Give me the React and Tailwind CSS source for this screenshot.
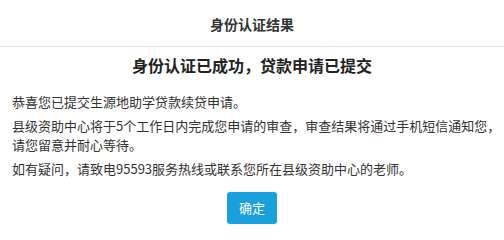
import React from 'react';

const PARAGRAPHS = [
  ['恭喜您已提交生源地助学贷款续贷申请。'],
  ['县级资助中心将于5个工作日内完成您申请的审查，审查结果将通过手机短信通知您，', '请您留意并耐心等待。'],
  ['如有疑问，请致电95593服务热线或联系您所在县级资助中心的老师。'],
];

export default function App() {
  return (
    <div
      className="w-[504px] h-[233px] bg-white text-[#333] overflow-hidden"
      style={{ fontFamily: '"Noto Sans CJK SC", "Liberation Sans", sans-serif' }}
    >
      {/* header */}
      <div className="h-[47px] flex items-center justify-center border-b border-[#e8e8e8]">
        <span className="text-[14px] font-bold leading-[20px] pt-[1px]">身份认证结果</span>
      </div>

      {/* body */}
      <div className="pt-[6px]">
        <h2 className="text-center text-[16px] font-bold leading-[24px] text-[#222]">
          身份认证已成功，贷款申请已提交
        </h2>

        <div className="mt-[15px] pl-[12px] flex flex-col gap-[5px]">
          {PARAGRAPHS.map((lines) => (
            <p key={lines[0]} className="text-[13px] leading-[19px] whitespace-nowrap">
              {lines.map((l, i) => (
                <span key={i} className="block">{l}</span>
              ))}
            </p>
          ))}
        </div>

        <div className="mt-[14px] flex justify-center">
          <button className="w-[50px] h-[32px] rounded-[3px] bg-[#1a9fde] text-white text-[13px]">
            确定
          </button>
        </div>
      </div>
    </div>
  );
}
